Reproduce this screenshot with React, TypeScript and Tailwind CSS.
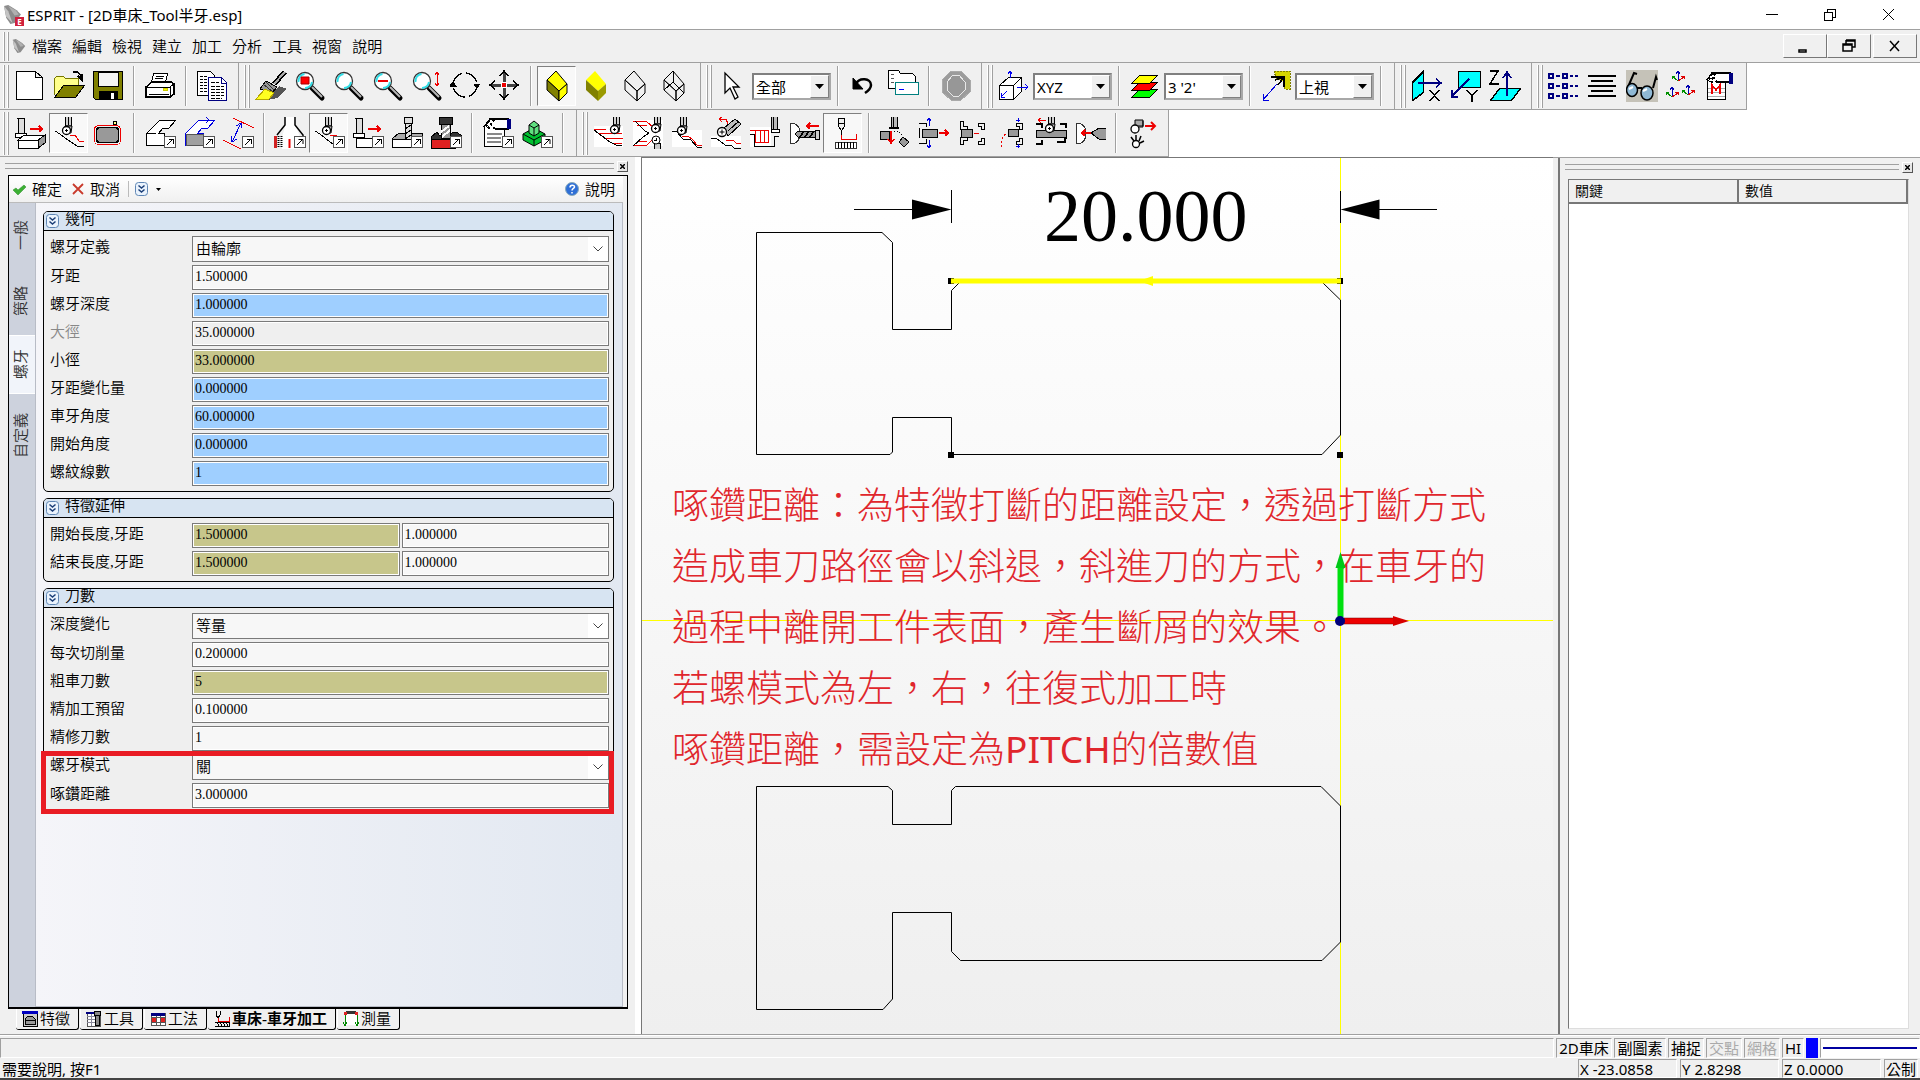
import { useState } from "react";
import type { ReactNode } from "react";

const sans = "font-['Noto_Sans','Noto_Sans_CJK_TC',sans-serif]";
const serif = "font-['Liberation_Serif','Noto_Sans_CJK_TC',serif]";

/* ---------- drawing helpers ---------- */

function Icon({ children }: { children: ReactNode }) {
  return (
    <svg width="32" height="32" viewBox="0 0 32 32" fill="none" stroke="#000" shapeRendering="crispEdges" aria-hidden="true">
      {children}
    </svg>
  );
}

// little "opens a flyout" box in the lower right corner
const Flyout = () => (
  <g>
    <rect x="20.5" y="19.5" width="11" height="11" fill="#fff" stroke="#555" />
    <path d="M23 28l6-6M24.500 22.500h4.500v4.500" />
  </g>
);

const Lens = ({ children }: { children?: ReactNode }) => (
  <g shapeRendering="auto">
    <path d="M18 18l10 10" stroke="#000" strokeWidth="5" strokeLinecap="round" />
    <path d="M18 17l10 10" stroke="#b8b8b8" strokeWidth="2" />
    <circle cx="11" cy="11" r="8.500" fill="#fff" stroke="#333" strokeWidth="1.300" />
    <path d="M4.500 12a7 7 0 0 1 6-8M11 18a7 7 0 0 0 7-6" stroke="#30dfe8" strokeWidth="2" />
    {children}
  </g>
);

// lathe tool: shank with a round insert
const Turret = ({ x = 0, y = 0 }: { x?: number; y?: number }) => (
  <g transform={`translate(${x} ${y})`} shapeRendering="auto">
    <path d="M12.500 0v9h6V0" fill="#d0d0d0" />
    <path d="M15.500 0v8" />
    <path d="M12 9h7l-1 7h-3z" fill="#bbb" />
    <circle cx="13.500" cy="13.500" r="4" fill="#fff" strokeWidth="1.300" />
    <path d="M12 13.500h3M13.500 12v3" />
  </g>
);

const CubeShape = ({ top, left, right, stroke = "#000" }: { top: string; left: string; right: string; stroke?: string }) => (
  <g stroke={stroke} shapeRendering="auto">
    <path d="M6 10L15 1l11 13-8 7z" fill={top} />
    <path d="M6 10l12 11v10L6 20z" fill={left} />
    <path d="M26 14v9l-8 8V21z" fill={right} />
  </g>
);

const icons: Record<string, ReactNode> = {
  new: <path d="M2.500 1.500h19l7 6v22h-26zM21.500 1.500v6h7" fill="#fff" />,
  open: (
    <>
      <path d="M1 25V9l3-3h6l2 2h13v7" fill="#ffff8c" stroke="#777700" />
      <path d="M2 27L11 15h21L23 27z" fill="#808000" />
      <path d="M20 2c5-1 8 2 9 7M25 6l4 4V4" strokeWidth="1.500" />
    </>
  ),
  save: (
    <>
      <path d="M1.500 1.500h29v28h-27l-2-2z" fill="#808000" />
      <path d="M6 2h20v14H6z" fill="#f4f4f4" />
      <path d="M7 21h18v8H7z" fill="#000" />
      <path d="M19 23h3v6h-3z" fill="#fff" stroke="none" />
    </>
  ),
  print: (
    <>
      <path d="M10 3h14l-3 10H7z" fill="#fff" />
      <path d="M12 6h8M11 8h8M10 11h8" />
      <path d="M2 17l6-5h19l3 2v10l-4 3H2z" fill="#fff" strokeWidth="1.500" />
      <path d="M2 17h24v10M26 17l4-3M5 24h20" />
      <path d="M19 18h4v2h-4z" fill="#ffff00" stroke="#cccc00" />
    </>
  ),
  copy: (
    <>
      <path d="M1.500 1.500h13l4 4v20h-17z" fill="#fff" />
      <path d="M4 6h8M4 9h12M4 12h8M4 15h8M4 18h8M4 21h8" strokeDasharray="3 1" />
      <path d="M12.500 7.500h13l5 5v18h-18z" fill="#fff" stroke="#000080" />
      <path d="M25.500 7v6h5" stroke="#000080" />
      <path d="M15 12h8M15 16h13M15 19h13M15 22h13M15 25h13M15 28h11" strokeDasharray="4 1" />
    </>
  ),
  brush: (
    <>
      <path d="M24 16l8 3-10 9-10 2z" fill="#555" stroke="none" />
      <path d="M30 2l-11 12" strokeWidth="5" />
      <path d="M30 2l-11 12" stroke="#aaa" strokeWidth="2" />
      <path d="M11 11l11 6-5 6-12-4z" fill="#999" />
      <path d="M8 14l10 8M11 12l8 8" stroke="#333" />
      <path d="M1 29l9-10 9 4-5 6z" fill="#ffff20" stroke="#b7a900" />
    </>
  ),
  zoomBox: (
    <Lens>
      <path d="M7 7h8v7H7z" fill="#f00" stroke="#a00" />
    </Lens>
  ),
  zoom: <Lens />,
  zoomOut: (
    <Lens>
      <path d="M6 11h10" stroke="#e00" strokeWidth="2" />
    </Lens>
  ),
  zoomFit: (
    <>
      <Lens />
      <path d="M26 2v14M24 5l2-3 2 3M24 13l2 3 2-3" stroke="#e00" />
    </>
  ),
  rotate: (
    <>
      <circle cx="15" cy="15" r="12" strokeWidth="1.500" strokeDasharray="15 4" />
      <path d="M0 16l3-4 3 4zM24 14l3 4 3-4z" fill="#000" />
    </>
  ),
  pan: (
    <>
      <path d="M15 2v26M2 15h26" strokeWidth="3" stroke="#444" />
      <path d="M11 6l4-5 4 5M11 24l4 5 4-5M6 11l-5 4 5 4M24 11l5 4-5 4" strokeWidth="1.500" />
      <circle cx="15" cy="15" r="3" fill="#e00" stroke="#fff" />
    </>
  ),
  cubeEdge: <CubeShape top="#ffff00" left="#808000" right="#ffff00" />,
  cubeShade: <CubeShape top="#ffff00" left="#808000" right="#9a9a00" stroke="none" />,
  cubeHidden: <CubeShape top="none" left="none" right="none" />,
  cubeWire: (
    <>
      <CubeShape top="none" left="none" right="none" />
      <path d="M15 1v11L6 20M15 12l11 11" />
    </>
  ),
  cursor: <path d="M8 3v20l5-5 5 11 3-2-5-10h6z" fill="#fff" shapeRendering="auto" strokeWidth="1.300" />,
  undo: (
    <g shapeRendering="auto">
      <path d="M8 14c3-7 15-6 15 1 0 4-3 6-6 8" strokeWidth="2.500" />
      <path d="M5 8v11h10z" fill="#000" />
    </g>
  ),
  paste: (
    <>
      <path d="M1.500 18.500v-18h10l2 3h12l3 3v12z" fill="#fff" />
      <path d="M4 4h3M4 8h3M4 12h3" stroke="#555" />
      <path d="M8.500 12.500h23v12h-23z" fill="#fff" stroke="#008080" />
      <path d="M12 19h5" stroke="#00f" />
    </>
  ),
  octagon: (
    <>
      <path d="M12 1h10l9 9v12l-9 8H12l-9-8V10z" fill="#9c9c9c" stroke="#aaa" />
      <path d="M14 5h6l6 7v8l-6 6h-6l-6-6v-8z" stroke="#e8e8e8" fill="#979797" />
    </>
  ),
  cubeAxes: (
    <>
      <path d="M1.500 15.500l9-8h13l-8 8z" fill="#fff" />
      <path d="M23.500 7.500v14l-8 8v-14z" fill="#fff" />
      <path d="M1.500 15.500h14v14h-14z" fill="#fff" />
      <path d="M12 8V1M10 4l2-3 2 3M19 17h11M27 14l3 3-3 3M9 21l-6 6M3 23v4h4" stroke="#0000f0" />
    </>
  ),
  layers: (
    <>
      <path d="M3 27h18l8-8H11z" fill="#00ff00" />
      <path d="M3 20h18l8-8H11z" fill="#f00" />
      <path d="M3 13h18l8-8H11z" fill="#ff0" />
    </>
  ),
  light: (
    <>
      <path d="M14 1h16v18h-5l-2-8-7-3z" fill="#d5d500" stroke="#808000" strokeDasharray="2 1" />
      <path d="M11 7h13v10M24 7l-9 3M24 7l-6 8" strokeWidth="1.500" />
      <path d="M17 14L3 30M3 24v6h6" stroke="#0000e0" />
    </>
  ),
  planeX: (
    <>
      <path d="M1.500 12.500l11-11v21l-11 8z" fill="#00ffff" strokeWidth="1.500" />
      <path d="M7 13h23M25 9l5 4-5 4" stroke="#000080" strokeWidth="1.500" />
      <path d="M19 20l9 11M28 20l-9 11" strokeWidth="1.500" />
    </>
  ),
  planeY: (
    <>
      <path d="M8.500 1.500h22v16h-22z" fill="#00ffff" strokeWidth="1.500" />
      <path d="M19 9L2 26M2 20v7h6" stroke="#000080" strokeWidth="1.500" />
      <path d="M17 20l5 6 5-6M22 26v6" strokeWidth="1.500" />
    </>
  ),
  planeZ: (
    <>
      <path d="M1.500 30.500h21l9-12h-21z" fill="#00ffff" strokeWidth="1.500" />
      <path d="M18 26V3M14 8l4-6 4 6" stroke="#000080" strokeWidth="1.500" />
      <path d="M1 1h8L1 14h9" strokeWidth="1.500" />
    </>
  ),
  tree: (
    <>
      {[4, 14, 24].map((y) => (
        <g key={y} stroke="#000080" strokeWidth="2">
          <path d={`M1 ${y}h4v4H1zM15 ${y}h4v4h-4z`} strokeWidth="1.500" />
          <path d={`M8 ${y + 2}h4M22 ${y + 2}h3M27 ${y + 2}h3`} />
        </g>
      ))}
    </>
  ),
  lines: <path d="M1 5h28M4 10h22M1 15h28M4 20h22M1 25h28" transform="translate(0 1)" strokeWidth="2" />,
  glasses: (
    <g shapeRendering="auto">
      <path d="M0 0h32v32H0z" fill="#c5c2b8" stroke="none" />
      <path d="M2 17L8 3l3 1M27 18l3-11 1 3" strokeWidth="2" />
      <ellipse cx="6" cy="20" rx="5.500" ry="6.500" fill="#8fb8d4" strokeWidth="1.500" />
      <ellipse cx="21" cy="23" rx="6" ry="7" fill="#8fb8d4" strokeWidth="1.500" />
      <path d="M11 18h5" strokeWidth="2" />
      <path d="M3 19l4-2M17 21l4-2" stroke="#fff" strokeWidth="2" />
    </g>
  ),
  csys: (
    <>
      {[
        [13, 1],
        [7, 17],
        [23, 15],
      ].map(([x, y]) => (
        <g key={x} transform={`translate(${x} ${y})`}>
          <path d="M0 10V0M-2 3l2-3 2 3" stroke="#0000b0" />
          <path d="M0 10l-6-5M-6 8V5h3" stroke="#009000" />
          <path d="M0 10l6-4M3 5h3v3" stroke="#e00000" />
        </g>
      ))}
    </>
  ),
  macro: (
    <>
      <path d="M3.500 10.500h18v19h-18z" fill="#fff" strokeWidth="1.500" />
      <path d="M3 10l5-7h18v9H12" fill="#fff" strokeWidth="1.500" />
      <path d="M25 3h3v10h-3z" fill="#000080" stroke="#000080" />
      <path d="M7 4l6 8M5 8l4 5M11 4l-5 8" strokeDasharray="2 2" strokeWidth="2" />
      <path d="M4 18h17M4 22h17M4 26h17" stroke="#aaa" />
      <path d="M8 24v-9l4 5 4-5v9" stroke="#e00" strokeWidth="1.500" />
    </>
  ),
  machine: (
    <>
      <path d="M3 1h7M4 1v15h6V1" fill="#ddd" />
      <path d="M1 16h11v4H1z" fill="#fff" />
      <path d="M4 23h20v8H4z" fill="#fff" />
      <path d="M4 23l6-5h21l-7 5z" fill="#fff" />
      <path d="M31 18v8l-7 5v-8z" fill="#999" />
      <path d="M16 12h12M25 9l3 3-3 3" stroke="#e00" strokeWidth="1.500" />
    </>
  ),
  lathe: (
    <>
      <path d="M2 14l5 3 5 4 12 8h7" />
      <path d="M17 18h5l4 6h5" stroke="#e00" />
      <Turret />
    </>
  ),
  contour: (
    <>
      <rect x="2.500" y="8.500" width="26" height="19" rx="4" stroke="#e00" />
      <rect x="4.500" y="10.500" width="22" height="15" rx="3" fill="#999" strokeWidth="1.500" />
      <circle cx="23" cy="6" r="2" fill="#ff8" />
    </>
  ),
  part: (
    <>
      <path d="M2.500 16.500l13-13h16l-7 8h-6l-4 5h6v12h-18z" fill="#fff" />
      <path d="M2 16h10" />
      <Flyout />
    </>
  ),
  partBlue: (
    <>
      <path d="M2.500 16.500l13-13h16l-7 8h-6l-4 5h6v12h-18z" fill="#fff" stroke="#0000e0" />
      <path d="M3 17h17v11H3z" fill="#a0a0a0" stroke="#555" />
      <path d="M16 3h10M23 0l3 3-3 3" stroke="#0000e0" />
      <Flyout />
    </>
  ),
  dims: (
    <>
      <path d="M11 1l21 10M1 23l18 9" stroke="#e00" />
      <path d="M19 6L10 25M14 9l5-3 1 5M9 19l1 6 5-3" stroke="#0000e0" />
      <Flyout />
    </>
  ),
  profile: (
    <g shapeRendering="auto">
      <path d="M11 0h11v10l4 10v12H8V20l3-10z" fill="#fff" stroke="none" />
      <path d="M11 0v8L3 18M21 0v8l8 10v6" strokeWidth="1.500" />
      <path d="M0 19h3v12H0z" fill="#d02020" stroke="none" />
      <path d="M4.500 19v12M7.500 19v12" strokeDasharray="1 1" strokeWidth="2" />
      <path d="M15.500 22v9" stroke="#e00" strokeWidth="2" />
      <Flyout />
    </g>
  ),
  latheFly: (
    <>
      <path d="M2 14l5 3 5 4 9 7" />
      <path d="M17 18h6l3 3" stroke="#e00" />
      <Turret />
      <Flyout />
    </>
  ),
  machineFly: (
    <>
      <path d="M3 1h7M4 1v15h6V1" fill="#ddd" />
      <path d="M1 16h11v4H1z" fill="#fff" />
      <path d="M4 21h18v9H4z" fill="#fff" />
      <path d="M16 12h12M25 9l3 3-3 3" stroke="#e00" strokeWidth="1.500" />
      <Flyout />
    </>
  ),
  drill: (
    <>
      <path d="M1 22l7-6h23v9l-6 5H1z" fill="#aaa" />
      <path d="M1 22h24v8H1z" fill="#fff" />
      <path d="M13 0h8v6h-8zM14 6h6v16h-6z" fill="#ddd" />
      <path d="M14 12l6-4M14 17l6-4M14 22l6-4" />
      <Flyout />
    </>
  ),
  mill: (
    <>
      <path d="M1 20l6-5 3 4 16-4 5 3v8l-5 4H1z" fill="#333" />
      <path d="M1 22h24v9H1z" fill="#e02020" />
      <path d="M9 0h13v7H9z" fill="#333" />
      <path d="M11 7h9v14h-9z" fill="#999" />
      <path d="M11 15l8-6M12 20l8-7" stroke="#fff" strokeWidth="2" />
      <Flyout />
    </>
  ),
  report: (
    <>
      <path d="M2.500 8.500h20v21h-20z" fill="#fff" strokeWidth="1.500" />
      <path d="M5 17h15M5 21h14M5 25h14" stroke="#888" strokeWidth="2" />
      <path d="M2 10l6-8h18v10H13" fill="#fff" strokeWidth="1.500" />
      <path d="M25 2h4v10h-4z" fill="#000080" stroke="none" />
      <path d="M6 4l7 8M4 8l4 4M12 3l-7 9" strokeDasharray="2 2" strokeWidth="2" />
      <Flyout />
    </>
  ),
  solid: (
    <g shapeRendering="auto">
      <path d="M2 17l11-6 11 6v6l-11 6-11-6z" fill="#00c030" />
      <path d="M2 17l11 6 11-6M13 23v6" />
      <path d="M8 8l5-4 5 4v8l-5 3-5-3z" fill="#60e080" />
      <path d="M8 8l5 3 5-3M13 11v8" />
      <Flyout />
    </g>
  ),
  rough: (
    <>
      <path d="M1 9h29v21H1z" fill="#fff" stroke="none" />
      <path d="M1 12h12M5 16h24M12 21h18M20 26h9" stroke="#e00" />
      <path d="M1 13l8 6 8 6 6 3h6" />
      <Turret x={8} y={-1} />
    </>
  ),
  balanced: (
    <>
      <path d="M1 3h30v26H1z" fill="#fff" stroke="none" />
      <path d="M1 4h13l7 6M5 8h10M1 28h14l6-6M5 24h10" stroke="#e00" />
      <path d="M3 4l10 10 4 2-6 4-10 9" />
      <Turret x={10} y={-2} />
      <path d="M22 32v-6h6v6" fill="#ccc" />
      <circle cx="24" cy="23" r="4" fill="#fff" shapeRendering="auto" />
      <path d="M22 23h3M24 21v3" />
    </>
  ),
  finish: (
    <>
      <path d="M1 13h30v17H1z" fill="#fff" stroke="none" />
      <path d="M1 14h4l7 8 8 1 6 7h5" />
      <path d="M11 19h6l5 4 4 5h5" stroke="#e00" />
      <Turret x={-3} />
    </>
  ),
  back: (
    <>
      <path d="M1 19h30v11H1z" fill="#fff" stroke="none" />
      <path d="M14 11L25 2l6 5-13 12z" fill="#bbb" />
      <path d="M18 14l11-10" />
      <g shapeRendering="auto">
        <circle cx="12" cy="15" r="4.500" fill="#fff" strokeWidth="1.300" />
        <path d="M9.500 15h5M12 12.500v5" />
      </g>
      <path d="M9 2h7l2 5M12 0L9 2l3 3" stroke="#e00" />
      <path d="M1 21h5l9 7h6l3 3h7" />
      <path d="M16 23h7l3 3h5" stroke="#e00" />
    </>
  ),
  groove: (
    <>
      <path d="M1 10h21v20H1z" fill="#fff" stroke="none" />
      <path d="M1 13h18v12H6V13M11 13v12M15 13v12" stroke="#e00" />
      <path d="M1 17h4v12h20V19h5" />
      <path d="M22 0v14h6V0M24 0v14" fill="#bbb" />
      <path d="M22 12h8v3h-8z" fill="#fff" />
    </>
  ),
  drillLathe: (
    <>
      <path d="M2 6c8 0 10 4 10 10s-2 11-10 11M2 6v21" fill="#fff" stroke="#333" />
      <path d="M10 14h18v6H10l-3-3z" fill="#999" />
      <path d="M12 20l4-6M17 20l4-6M22 20l4-6" strokeWidth="1.500" />
      <path d="M27 13h4v9h-4z" fill="#ccc" />
      <path d="M19 9h12M22 6l-3 3 3 3" stroke="#e00" strokeWidth="1.500" />
    </>
  ),
  thread: (
    <>
      <path d="M11.500 1.500v8l3 4 3-4v-8z" fill="#eee" />
      <path d="M11 6h7M14 13v5" />
      <path d="M14 18v4h15v-5" stroke="#e00" />
      <path d="M8 25h21v6H8z" fill="#fff" stroke="#333" />
      <path d="M11 25v6M14 25v6M17 25v6M20 25v6M23 25v6M26 25v6" />
    </>
  ),
  cutoff: (
    <>
      <path d="M1 14h9v8H1z" fill="#999" />
      <path d="M12 0v11h6V0M14 0v11" fill="#bbb" />
      <path d="M10 11h10" strokeWidth="2" />
      <path d="M12 14v12M9 22l3 4 3-4" stroke="#e00" strokeWidth="1.500" />
      <path d="M15 14h5l4 6" strokeDasharray="1 2" />
      <path d="M24 20l6 5-5 5-5-5z" fill="#999" />
    </>
  ),
  barFeed: (
    <>
      <path d="M4 12h15v8H4z" fill="#999" />
      <path d="M1 6h7v4M1 26h7v-4M1 11v10" />
      <path d="M21 16h9M27 13l3 3-3 3" stroke="#e00" strokeWidth="1.500" />
      <path d="M11 9V1M9 4l2-3 2 3M11 23v8M9 28l2 3 2-3" stroke="#0000e0" />
    </>
  ),
  pickup: (
    <>
      <path d="M4 12h11v8H4z" fill="#999" />
      <path d="M3.500 4.500h3v5h4v3h-7zM3.500 27.500v-7h7v3h-4v4zM21 6h6v6h-3V9h-3zM21 27h6v-6h-3v3h-3z" />
      <path d="M17 16h5" stroke="#e00" />
    </>
  ),
  transfer: (
    <>
      <path d="M12 12h10v7H12z" fill="#999" />
      <path d="M20 6h6v6h-3V9h-3zM20 27h6v-6h-3v3h-3z" />
      <path d="M5 30c0-8 2-12 6-14" stroke="#e00" strokeDasharray="2 2" />
      <path d="M22 1v4M20 3h4M22 27v4M20 29h4" stroke="#0000e0" />
    </>
  ),
  steady: (
    <>
      <path d="M1 13h30v8l-5-1H6l-5 1z" fill="#999" />
      <path d="M1 7h6v4M25 7h6v4M1 27h6v-4M22 25h8v-4" strokeWidth="1.500" />
      <Turret x={1} y={-2} />
      <path d="M3 3h8M6 1L3 3l3 3" stroke="#e00" />
    </>
  ),
  tailstock: (
    <>
      <path d="M2 6c8 0 10 4 10 10s-2 11-10 11M2 6v21" fill="#fff" stroke="#333" />
      <path d="M17 16l8-5h7v11h-7z" fill="#999" />
      <path d="M8 16h9M11 13l-3 3 3 3" stroke="#e00" strokeWidth="1.500" />
    </>
  ),
  release: (
    <g shapeRendering="auto">
      <path d="M9 3h8v6H9z" fill="#aaa" />
      <circle cx="9" cy="12" r="4" fill="#fff" strokeWidth="1.300" />
      <path d="M13 10h4V4" />
      <path d="M19 9h9M25 5l4 4-4 4" stroke="#e00" strokeWidth="2" />
      <circle cx="10" cy="27" r="3.500" fill="#fff" strokeWidth="1.300" />
      <path d="M5 20l3 4M10 18v5M15 19l-2 5M18 24l-4 2" strokeWidth="1.500" />
    </g>
  ),
};

/* ---------- toolbar data ---------- */

type Tool = string | { pressed: string; label: string } | { select: string; label: string };

const row1: Tool[][] = [
  ["new", "open", "save", "|", "print", "|", "copy"],
  ["brush", "zoomBox", "zoom", "zoomOut", "zoomFit", "rotate", "pan", "|", { pressed: "cubeEdge", label: "cubeEdge" }, "cubeShade", "cubeHidden", "cubeWire"],
  ["cursor", { select: "全部", label: "filter" }, "|", "undo", "paste", "|", "octagon"],
  ["cubeAxes", { select: "XYZ", label: "work plane" }, "|", "layers", { select: "3 '2'", label: "layer" }, "|", "light", { select: "上視", label: "view" }, "|"],
  ["planeX", "planeY", "planeZ"],
  ["tree", "lines", "glasses", "csys", "macro"],
];

const row2: Tool[][] = [
  [
    "machine", { pressed: "lathe", label: "lathe" }, "contour", "|", "part", "partBlue", "dims", "|",
    "profile", { pressed: "latheFly", label: "lathe menu" }, "machineFly", "drill", "mill", "|", "report", "solid", "|",
  ],
  [
    "rough", "balanced", "finish", "back", "groove", "drillLathe", { pressed: "thread", label: "thread" }, "|",
    "cutoff", "barFeed", "pickup", "transfer", "steady", "tailstock", "|", "release",
  ],
];

function ToolItem({ tool }: { tool: Tool }) {
  if (tool === "|") {
    return (
      <div className="flex w-[13px] justify-center">
        <div className="h-10 w-0.5 border-r border-r-white bg-[#a0a0a0]" />
      </div>
    );
  }
  if (typeof tool === "string") {
    return (
      <button aria-label={tool} className="flex h-10 w-[39px] items-center justify-center">
        <Icon>{icons[tool]}</Icon>
      </button>
    );
  }
  if ("pressed" in tool) {
    return (
      <button
        aria-label={tool.label}
        aria-pressed="true"
        className="flex h-10 w-[39px] items-center justify-center border border-t-[#808080] border-r-white border-b-white border-l-[#808080] bg-[#f8f8f8]"
      >
        <Icon>{icons[tool.pressed]}</Icon>
      </button>
    );
  }
  return (
    <div className="relative h-[27px] w-[79px] border-2 border-t-[#808080] border-r-[#a8a8a8] border-b-[#a8a8a8] border-l-[#808080] bg-white">
      <select aria-label={tool.label} className="h-full w-full appearance-none pl-0.5 text-[15px] leading-5 outline-none">
        <option>{tool.select}</option>
      </select>
      <span className="pointer-events-none absolute inset-y-0 right-0 flex w-[19px] items-center justify-center border border-t-white border-r-[#808080] border-b-[#808080] border-l-white bg-[#f0f0f0]">
        <svg width="9" height="5" viewBox="0 0 9 5" aria-hidden="true">
          <path d="M0 0h9L4.500 5z" />
        </svg>
      </span>
    </div>
  );
}

function ToolRow({ bands }: { bands: Tool[][] }) {
  return (
    <div className="flex h-[47px] shrink-0 bg-white">
      {bands.map((band, i) => (
        <div key={i} className={`flex items-center border-r border-b border-[#a0a0a0] bg-[#f0f0f0] pr-[7px] ${i === 0 ? "pl-0" : "pl-0.5"}`}>
          <div className="mr-px ml-[3px] flex h-[43px] gap-0.5">
            <i className="w-[2px] border-r border-[#a0a0a0] bg-white" />
            <i className="w-[2px] border-r border-[#a0a0a0] bg-white" />
          </div>
          {band.map((t, j) => (
            <ToolItem key={j} tool={t} />
          ))}
        </div>
      ))}
    </div>
  );
}

/* ---------- parameter panel ---------- */

const tones = {
  plain: "bg-[#f7f7f7]",
  blue: "bg-[#9fcfff]",
  olive: "bg-[#c7c68b]",
  off: "bg-[#efefef]",
};

type Field = { label: string; values: string[]; tone?: (keyof typeof tones)[]; select?: boolean; disabled?: boolean };

const geometry: Field[] = [
  { label: "螺牙定義", values: ["由輪廓"], select: true },
  { label: "牙距", values: ["1.500000"] },
  { label: "螺牙深度", values: ["1.000000"], tone: ["blue"] },
  { label: "大徑", values: ["35.000000"], tone: ["off"], disabled: true },
  { label: "小徑", values: ["33.000000"], tone: ["olive"] },
  { label: "牙距變化量", values: ["0.000000"], tone: ["blue"] },
  { label: "車牙角度", values: ["60.000000"], tone: ["blue"] },
  { label: "開始角度", values: ["0.000000"], tone: ["blue"] },
  { label: "螺紋線數", values: ["1"], tone: ["blue"] },
];

const extension: Field[] = [
  { label: "開始長度,牙距", values: ["1.500000", "1.000000"], tone: ["olive", "plain"] },
  { label: "結束長度,牙距", values: ["1.500000", "1.000000"], tone: ["olive", "plain"] },
];

const passes: Field[] = [
  { label: "深度變化", values: ["等量"], select: true },
  { label: "每次切削量", values: ["0.200000"] },
  { label: "粗車刀數", values: ["5"], tone: ["olive"] },
  { label: "精加工預留", values: ["0.100000"] },
  { label: "精修刀數", values: ["1"] },
];

const marked: Field[] = [
  { label: "螺牙模式", values: ["關"], select: true },
  { label: "啄鑽距離", values: ["3.000000"] },
];

function DoubleChevron() {
  return (
    <svg width="13" height="14" viewBox="0 0 13 14" fill="none" aria-hidden="true">
      <rect x="0.500" y="0.500" width="12" height="13" rx="3" fill="#eaf3fd" stroke="#5f86b5" />
      <path d="M3.500 3.500l3 2.500 3-2.500M3.500 7.500l3 2.500 3-2.500" stroke="#1c3f78" strokeWidth="1.500" />
    </svg>
  );
}

function FieldRow({ field }: { field: Field }) {
  return (
    <div className="flex">
      <label htmlFor={field.label} className={`w-[148px] shrink-0 pl-1.5 text-[15px] leading-[22px] ${field.disabled ? "text-[#888]" : ""}`}>
        {field.label}
      </label>
      {field.select ? (
        <div className="relative h-[26px] flex-1 border border-[#7a7a7a] bg-[#f7f7f7]">
          <select id={field.label} className="block h-6 w-full appearance-none pl-[3px] text-[15px] leading-5 outline-none">
            <option>{field.values[0]}</option>
          </select>
          <span className="pointer-events-none absolute inset-y-0 right-0 flex w-5 items-center justify-center bg-white">
            <svg width="10" height="6" viewBox="0 0 10 6" fill="none" stroke="#444" aria-hidden="true">
              <path d="M0.500 0.500L5 5l4.500-4.500" />
            </svg>
          </span>
        </div>
      ) : (
        <div className="flex min-w-0 flex-1 gap-0.5">
          {field.values.map((v, i) => (
            <input
              key={i}
              id={i === 0 ? field.label : undefined}
              aria-label={i === 0 ? undefined : `${field.label} ${i + 1}`}
              defaultValue={v}
              readOnly={field.disabled}
              className={`h-[25px] w-full min-w-0 flex-1 border border-[#7a7a7a] px-0.5 pb-0.5 text-sm leading-5 shadow-[inset_0_0_0_1px_#fff] outline-none ${tones[field.tone?.[i] ?? "plain"]}`}
            />
          ))}
        </div>
      )}
    </div>
  );
}

function Card({ title, fields, children }: { title: string; fields: Field[]; children?: ReactNode }) {
  return (
    <section className="rounded-[5px] border border-black bg-[#efefef]">
      <h2 className="flex h-[19px] items-center gap-1.5 rounded-t-[4px] border-b border-black bg-[#d7e4f2] pl-0.5 text-[15px] leading-4">
        <DoubleChevron />
        <span className="pb-1">{title}</span>
      </h2>
      <div className="flex flex-col gap-[3px] py-[5px] pr-1">
        {fields.map((f) => (
          <FieldRow key={f.label} field={f} />
        ))}
        {children}
      </div>
    </section>
  );
}

const sideTabs = [
  { name: "一般", size: "h-[65px]" },
  { name: "策略", size: "h-[67px]" },
  { name: "螺牙", size: "h-[59px]" },
  { name: "自定義", size: "h-[84px]" },
];

const bottomTabs = [
  {
    name: "特徵",
    icon: (
      <>
        <path d="M1 2h14v13H1z" fill="#ccc" stroke="#000" />
        <path d="M0 0h16v3H0z" fill="#0000c0" />
        <path d="M3 13V8l3-3h4l3 3v5zM3 9h10" stroke="#000" fill="#999" />
      </>
    ),
  },
  {
    name: "工具",
    icon: (
      <>
        <path d="M1 2h13v13H1z" fill="#fff" stroke="#555" />
        <path d="M1 5h13M1 8h13M1 11h13M5 2v13" stroke="#889" />
        <path d="M0 1h9v2H0z" fill="#000080" />
        <path d="M8 0h6v4H8zM9 4h4v10H9z" fill="#888" stroke="#000" />
      </>
    ),
  },
  {
    name: "工法",
    icon: (
      <>
        <path d="M1 2h14v12H1z" fill="#fff" stroke="#555" />
        <path d="M1 2h14v3H1z" fill="#000080" />
        <path d="M2 7h5v4H2zM10 7h5v4h-5z" fill="#e02020" />
        <path d="M1 6h14M1 11h14M6 5v9M10 5v9" stroke="#555" />
      </>
    ),
  },
  {
    name: "車床-車牙加工",
    icon: (
      <>
        <path d="M2 0v4l2 3 2-3V0" fill="none" stroke="#000" />
        <path d="M4 7v3h11V6" fill="none" stroke="#e00" />
        <path d="M1 11h14v4H1M3 11l2 4M6 11l2 4M9 11l2 4M12 11l2 4" fill="none" stroke="#000" />
      </>
    ),
  },
  {
    name: "測量",
    icon: (
      <>
        <path d="M2 14V2h12v12" fill="#fff" stroke="#080" />
        <path d="M0 11l2 4 2-4M12 11l2 4 2-4" fill="none" stroke="#080" />
        <path d="M3 0h10v3H3z" fill="#333" />
        <path d="M1 1h3v3H1zM12 1h3v3h-3z" fill="#d22" />
      </>
    ),
  },
];

function GripBar() {
  return (
    <div className="flex h-[18px] shrink-0 items-center gap-[3px] pl-[5px]">
      <div className="h-[6px] flex-1 border-y border-[#a0a0a0]" />
      <button aria-label="close panel" className="flex h-[11px] w-[11px] items-center justify-center border border-t-white border-r-[#555] border-b-[#555] border-l-white bg-[#e6e6e6]">
        <svg width="5" height="5" viewBox="0 0 5 5" stroke="#000" strokeWidth="1.500" aria-hidden="true">
          <path d="M0 0l5 5M5 0L0 5" />
        </svg>
      </button>
    </div>
  );
}

function ParameterPanel() {
  const [side, setSide] = useState("螺牙");
  const [bottom, setBottom] = useState("車床-車牙加工");

  return (
    <aside className={`flex w-[642px] shrink-0 flex-col border-r border-[#777] bg-[#f0f0f0] font-[350] ${serif}`}>
      <div className="flex min-h-0 flex-1 flex-col border-r-[6px] border-white pr-[7px]">
        <GripBar />
        <div className="ml-2 flex min-h-0 flex-1 flex-col border border-b-2 border-black pr-1">
          <div className={`flex h-[27px] shrink-0 items-center border-b border-[#bbb] bg-linear-to-b from-white to-[#f0f0f0] pr-2 pl-1 text-[15px] leading-5 ${sans}`}>
            <button className="flex items-center gap-1.5">
              <svg width="13" height="11" viewBox="0 0 13 11" aria-hidden="true">
                <path d="M0 6l3-2 2 2 6-5 2 2-8 8z" fill="#3cb034" stroke="#2a8a28" strokeWidth="0.500" />
              </svg>
              確定
            </button>
            <button className="ml-2.5 flex items-center gap-1.5">
              <svg width="12" height="12" viewBox="0 0 12 12" fill="none" stroke="#c93a2c" strokeWidth="1.800" aria-hidden="true">
                <path d="M1 1l10 10M11 1L1 11" />
              </svg>
              取消
            </button>
            <div className="mr-1.5 ml-2 h-4 w-px bg-[#bbb]" />
            <button aria-label="expand" className="flex items-center gap-2">
              <DoubleChevron />
              <svg width="5" height="3" viewBox="0 0 5 3" aria-hidden="true">
                <path d="M0 0h5L2.500 3z" />
              </svg>
            </button>
            <button className="ml-auto flex items-center gap-1.5">
              <svg width="14" height="14" viewBox="0 0 14 14" aria-hidden="true">
                <circle cx="7" cy="7" r="6.500" fill="#2f6fd6" stroke="#8ab" />
                <path d="M5 5.500c0-3 4.500-3 4.500-.5C9.500 6.500 7 6.500 7 8.500M7 10v1.500" fill="none" stroke="#fff" strokeWidth="1.500" />
              </svg>
              說明
            </button>
          </div>

          <div className="flex min-h-0 flex-1">
            <div className="flex w-[26px] shrink-0 flex-col bg-[#cdd2dd]">
              {sideTabs.map((t) => (
                <button
                  key={t.name}
                  onClick={() => setSide(t.name)}
                  className={`flex w-full items-center justify-center pr-0.5 text-[15px] leading-5 text-[#333] ${t.size} ${
                    side === t.name ? "border-y border-white bg-[#f1f4fa]" : ""
                  }`}
                >
                  <span className="rotate-180 [text-orientation:sideways] [writing-mode:vertical-rl]">{t.name}</span>
                </button>
              ))}
            </div>
            <div className="flex-1 border-r border-b border-l border-[#b8bcc6] bg-linear-to-r from-[#f5f5f9] to-[#e2e8f1] pt-2 pr-2 pl-[7px]">
              <div className="flex flex-col gap-1.5">
                <Card title="幾何" fields={geometry} />
                <Card title="特徵延伸" fields={extension} />
                <Card title="刀數" fields={passes}>
                  <div className="relative flex flex-col gap-[3px]">
                    {marked.map((f) => (
                      <FieldRow key={f.label} field={f} />
                    ))}
                    <div className="pointer-events-none absolute -top-[3px] -right-[5px] -bottom-[6px] -left-[3px] border-[5px] border-[#e91c24]" />
                  </div>
                </Card>
              </div>
            </div>
          </div>
        </div>

        <div className="flex h-[25px] shrink-0 items-start gap-px pl-4">
          {bottomTabs.map((t) => (
            <button
              key={t.name}
              onClick={() => setBottom(t.name)}
              className={`flex h-[21px] items-center gap-0.5 rounded-b-[3px] border-r border-b border-black pr-2 pl-1.5 text-[15px] leading-5 ${
                bottom === t.name ? "bg-[#f0f0f0] font-bold" : "shadow-[inset_1px_0_0_#fff]"
              }`}
            >
              <svg width="16" height="16" viewBox="0 0 16 16" shapeRendering="crispEdges" aria-hidden="true">
                {t.icon}
              </svg>
              {t.name}
            </button>
          ))}
        </div>
      </div>
    </aside>
  );
}

/* ---------- drawing area ---------- */

const note = [
  "啄鑽距離：為特徵打斷的距離設定，透過打斷方式",
  "造成車刀路徑會以斜退，斜進刀的方式，在車牙的",
  "過程中離開工件表面，產生斷屑的效果。",
  "若螺模式為左，右，往復式加工時",
];

function Canvas() {
  return (
    <main className="relative min-w-0 flex-1 overflow-hidden border-t border-[#777] bg-linear-to-b from-white to-[#efefef]">
      <svg className="absolute inset-0 h-full w-full" viewBox="642 158 911 876" preserveAspectRatio="xMidYMid slice" fill="none" stroke="#000">
        <path d="M1340.500 158v876M642 620.500h911" stroke="#ffff00" />
        <path d="M951.500 454.500v-37h-59V452l-2.500 2.500H756.500v-222H882l10.500 10v87h59v-39l7.500-7.500M1323 283l17.500 17v135L1322 454.500H951.500" />
        <path d="M756.500 786.500H888l4.500 4v34h59v-34l4-4H1321l19.500 19.500v136l-18.500 18.500H960.500l-9-9v-39h-59V999l-9.500 10.500H756.500z" />

        <path d="M951.500 190v33M1340.500 191v32M854 209.500h60M1378 209.500h59" />
        <path d="M951.500 209.500l-39.500-10v20zM1340.500 209.500l39-10v20z" fill="#000" stroke="none" />
        <text x="1044" y="241" className="font-['Liberation_Serif',serif] text-[74px]" fill="#000" stroke="none">
          20.000
        </text>

        <g fill="#000" stroke="none">
          <path d="M948 278h6v6h-6zM948 452h6v6h-6zM1337 452h6v6h-6zM1337 278h6v6h-6z" />
        </g>
        <path d="M951 281h390" stroke="#ffff00" strokeWidth="5" />
        <path d="M1139 281l14-5v10z" fill="#ffff00" stroke="none" />
      </svg>

      <div className={`absolute top-[316px] left-[30px] text-[37px] leading-[61px] font-light whitespace-nowrap text-[#e0262c] ${sans}`}>
        {note.map((l) => (
          <p key={l}>{l}</p>
        ))}
        <p>
          啄鑽距離，需設定為<span className="font-normal">PITCH</span>的倍數值
        </p>
      </div>

      <svg className="pointer-events-none absolute inset-0 h-full w-full" viewBox="642 158 911 876" preserveAspectRatio="xMidYMid slice" aria-hidden="true">
        <path d="M1337.500 567h6v50h-6z" fill="#00e010" />
        <path d="M1340.500 552l5 16h-10z" fill="#00c818" />
        <path d="M1344 618h50v6h-50z" fill="#ee0000" stroke="#700" strokeWidth="0.500" />
        <path d="M1409 621l-16-5v10z" fill="#d80000" />
        <circle cx="1340" cy="621" r="5" fill="#00007a" />
      </svg>
    </main>
  );
}

function WatchPanel() {
  return (
    <aside className={`flex w-[367px] shrink-0 flex-col border-t border-[#a0a0a0] bg-[#f0f0f0] pl-[5px] ${sans}`}>
      <div className="flex min-h-0 flex-1 flex-col border-l-2 border-[#777] pr-[7px]">
        <GripBar />
        <div className="mt-[3px] mr-1 mb-[5px] ml-2 min-h-0 flex-1 border border-t-[#777] border-r-[#ddd] border-b-[#ddd] border-l-[#777] bg-white">
          <table className="w-full table-fixed border-collapse text-left text-[14px] leading-5">
            <thead>
              <tr className="bg-[#f0f0f0]">
                <th className="h-[23px] w-1/2 border-r-2 border-b-2 border-[#777] px-1.5 font-[350]">關鍵</th>
                <th className="h-[23px] border-r-2 border-b-2 border-[#777] px-1.5 font-[350]">數值</th>
              </tr>
            </thead>
          </table>
        </div>
      </div>
    </aside>
  );
}

/* ---------- frame ---------- */

const menus = ["檔案", "編輯", "檢視", "建立", "加工", "分析", "工具", "視窗", "說明"];

function Cone({ size }: { size: number }) {
  return (
    <svg width={size} height={size} viewBox="0 0 18 18" aria-hidden="true">
      <path d="M1 1l4-1 8 5 4 4-6 8-4 1-4-6z" fill="#8c8c8c" />
      <path d="M1 1l4 5 4 11-6-6z" fill="#c4c4c4" />
      <path d="M5 1l7 4 3 4-4 1z" fill="#b0b0b0" />
    </svg>
  );
}

const sunken = "border border-t-[#a0a0a0] border-r-white border-b-white border-l-[#a0a0a0]";

const modes = [
  { text: "2D車床", size: "w-[56px]" },
  { text: "副圖素", size: "w-[52px]" },
  { text: "捕捉", size: "w-9" },
  { text: "交點", size: "w-9", off: true },
  { text: "網格", size: "w-9", off: true },
  { text: "HI", size: "w-[22px]" },
];

function StatusBar() {
  return (
    <footer className={`shrink-0 border-t border-[#a0a0a0] bg-[#f0f0f0] text-[15px] leading-[18px] ${sans}`}>
      <div className="flex h-[23px] gap-[2px] border-t border-white pt-0.5">
        <div className={`flex-1 ${sunken}`} />
        {modes.map((m) => (
          <div key={m.text} className={`flex items-center justify-center whitespace-nowrap ${sunken} ${m.size} ${m.off ? "text-[#aaa]" : ""}`}>
            {m.text}
          </div>
        ))}
        <div className="w-3 bg-[#0000ff]" />
        <div className={`flex w-[100px] items-center bg-white px-0.5 ${sunken}`}>
          <div className="h-0.5 w-full bg-[#0000a0]" />
        </div>
      </div>
      <div className="flex h-[20px] gap-[3px] pt-px pr-0.5">
        <div className="flex-1 pt-px pl-0.5">需要說明, 按F1</div>
        <div className={`w-[99px] pl-px whitespace-nowrap ${sunken}`}>X -23.0858</div>
        <div className={`w-[99px] pl-px whitespace-nowrap ${sunken}`}>Y 2.8298</div>
        <div className={`w-[99px] pl-px whitespace-nowrap ${sunken}`}>Z 0.0000</div>
        <div className={`w-[34px] pl-px whitespace-nowrap ${sunken}`}>公制</div>
      </div>
      <div className="h-0.5 bg-[#444]" />
    </footer>
  );
}

export default function App() {
  return (
    <div className={`flex h-screen flex-col bg-[#f0f0f0] text-black ${sans}`}>
      <header className="flex h-[30px] shrink-0 items-center border-b border-[#a0a0a0] bg-white pl-[3px]">
        <span className="relative">
          <Cone size={19} />
          <b className="absolute -right-0.5 -bottom-0.5 flex h-[9px] w-[9px] items-center justify-center bg-[#d0203c] text-[8px] leading-none text-white">E</b>
        </span>
        <h1 className="ml-[5px] text-[15px] leading-5">ESPRIT - [2D車床_Tool半牙.esp]</h1>
        <div className="mr-[3px] ml-auto flex">
          <button aria-label="minimize" className="flex h-7 w-[58px] items-center justify-center">
            <svg width="12" height="12" viewBox="0 0 12 12" stroke="#000" shapeRendering="crispEdges">
              <path d="M0 5h12" />
            </svg>
          </button>
          <button aria-label="restore" className="flex h-7 w-[58px] items-center justify-center">
            <svg width="12" height="12" viewBox="0 0 12 12" fill="none" stroke="#000" shapeRendering="crispEdges">
              <path d="M0.500 3.500h8v8h-8zM3.500 3V0.500h8v8H9" />
            </svg>
          </button>
          <button aria-label="close" className="flex h-7 w-[58px] items-center justify-center">
            <svg width="13" height="13" viewBox="0 0 13 13" stroke="#000">
              <path d="M1 1l11 11M12 1L1 12" />
            </svg>
          </button>
        </div>
      </header>

      <nav className="flex h-[33px] shrink-0 items-center border-b border-[#a0a0a0] pl-[3px]">
        <div className="flex h-[29px] gap-0.5">
          <i className="w-[2px] border-r border-[#a0a0a0] bg-white" />
          <i className="w-[2px] border-r border-[#a0a0a0] bg-white" />
        </div>
        <div className="ml-[3px]">
          <Cone size={14} />
        </div>
        <ul className="ml-1.5 flex gap-2.5 text-[15px] leading-5 font-[350]">
          {menus.map((m) => (
            <li key={m}>
              <button>{m}</button>
            </li>
          ))}
        </ul>
        <div className="mr-[3px] ml-auto flex">
          {["M1 11h7v2H1z", "M4 1h9v7h-3M4 1v4M1 5h9v7H1zM4 2h9M1 6h9", "M2 2l9 10M11 2L2 12"].map((d, i) => (
            <button
              key={d}
              aria-label={["minimize document", "restore document", "close document"][i]}
              className={`flex h-6 w-11 items-center justify-center border border-t-white border-r-[#777] border-b-[#777] border-l-white ${i === 2 ? "ml-0.5" : ""}`}
            >
              <svg width="14" height="14" viewBox="0 0 14 14" fill="none" stroke="#000" strokeWidth="1.500">
                <path d={d} />
              </svg>
            </button>
          ))}
        </div>
      </nav>

      <ToolRow bands={row1} />
      <ToolRow bands={row2} />

      <div className="flex min-h-0 flex-1">
        <ParameterPanel />
        <Canvas />
        <WatchPanel />
      </div>

      <StatusBar />
    </div>
  );
}
